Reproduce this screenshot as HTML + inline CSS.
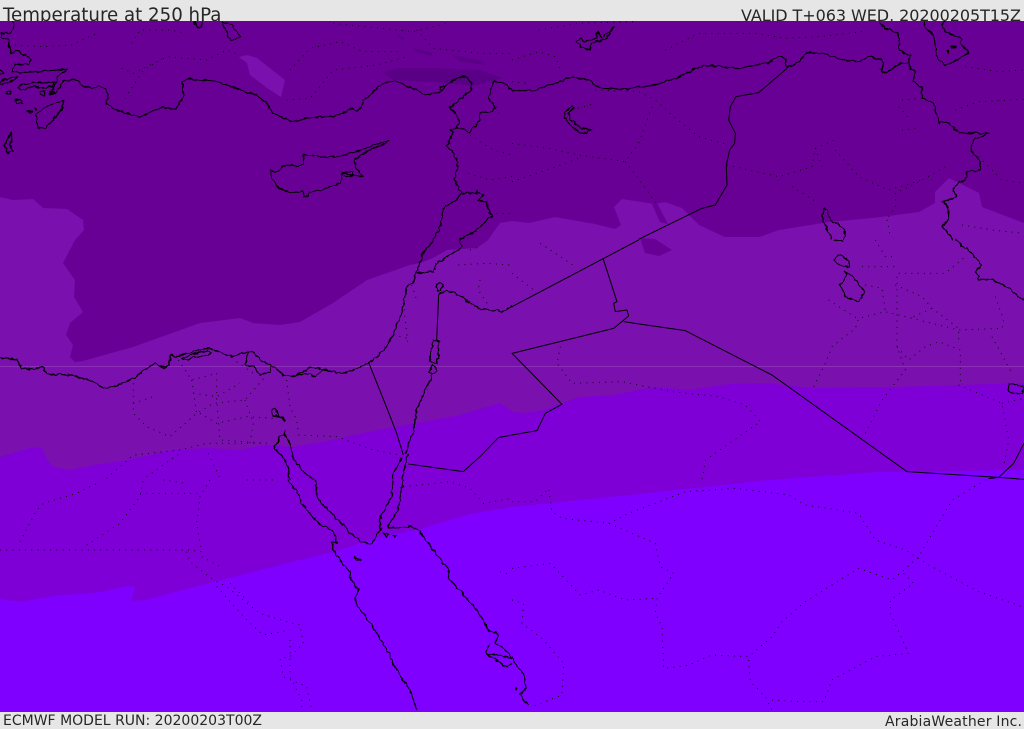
<!DOCTYPE html>
<html><head><meta charset="utf-8"><title>Temperature at 250 hPa</title>
<style>
html,body{margin:0;padding:0;background:#e6e6e6;overflow:hidden}
svg{display:block}
text{font-family:"DejaVu Sans","Liberation Sans",sans-serif;fill:#262626}
.c path{fill:none;stroke:#000;stroke-width:3.6;stroke-linejoin:round}
.b path{fill:none;stroke:#000;stroke-width:3;stroke-linejoin:round}
.d path{fill:none;stroke:#000;stroke-width:2.8;stroke-dasharray:2.8 16}
</style></head><body>
<svg width="1024" height="729" viewBox="0 0 1024 729" xmlns="http://www.w3.org/2000/svg">
<defs><clipPath id="m"><rect x="0" y="21" width="1024" height="691"/></clipPath>
<filter id="w" x="-5%" y="-5%" width="110%" height="110%" color-interpolation-filters="sRGB"><feTurbulence type="fractalNoise" baseFrequency=".07" numOctaves="2" seed="4"/><feDisplacementMap in="SourceGraphic" scale="12" xChannelSelector="R" yChannelSelector="G"/></filter></defs>
<rect width="1024" height="729" fill="#e6e6e6"/>
<text x="3" y="21" font-size="18.2">Temperature at 250 hPa</text>
<text x="1021" y="21" font-size="16" text-anchor="end" textLength="280">VALID T+063 WED, 20200205T15Z</text>
<text x="3" y="725" font-size="14" textLength="259">ECMWF MODEL RUN: 20200203T00Z</text>
<text x="885" y="726" font-size="14" textLength="137">ArabiaWeather Inc.</text>
<g clip-path="url(#m)">
<rect x="0" y="21" width="1024" height="691" fill="#7f00ff"/>
<path fill="#7e00d6" d="M0 21L0 599 12 601 25 601 60 595 82 594 100 592 128 586 135 587 133 595 132 601 145 600 213 582 300 560 333 552 380 537 417 530 470 514 512 507 640 494 769 480 879 472 1024 470 1024 21Z"/>
<path fill="#7a10ad" d="M0 21L0 457 33 447 42 448 47 460 53 467 70 470 93 465 127 460 173 450 207 448 240 450 263 445 293 447 333 440 367 432 417 423 460 415 500 403 512 412 525 413 545 410 579 397 612 395 655 387 689 390 729 384 765 383 812 388 895 387 1024 383 1024 21Z"/>
<rect x="0" y="366" width="1024" height="1" fill="#8c30b8"/>
<path fill="#690096" d="M0 21L0 197 13 200 33 199 43 208 67 209 83 220 84 230 75 240 63 263 75 280 74 297 83 312 70 323 66 335 73 345 70 357 75 362 83 361 133 347 200 323 240 318 253 323 280 325 300 322 333 303 367 280 410 265 420 263 433 258 447 250 477 248 488 240 500 223 512 221 529 223 555 217 595 224 615 229 621 225 614 207 622 199 655 204 665 202 682 208 699 225 725 237 759 237 779 230 829 222 872 218 919 212 935 203 935 192 949 178 979 193 982 207 1024 223 1024 21Z"/>
<path fill="#7a10ad" d="M239 57L247 55 257 58 285 80 281 97 267 88 250 75 247 63Z"/>
<path fill="#690096" d="M652 204L657 203 668 224 660 222Z M640 238L655 239 672 250 659 256 645 253Z"/>
<path fill="#5a0086" d="M383 73L397 68 433 68 480 70 503 78 473 86 433 82 393 80Z M397 34L405 38 403 40 397 37Z M413 48L433 53 431 56 414 51Z M452 55L483 61 485 65 460 61Z"/>
<g transform="scale(.33333)">
<g class="d">
<path d="M45 135L130 140 215 135 290 100M395 130L420 90 510 90 560 100M375 295L430 210 500 170 620 180 680 150 720 165M365 205L400 220 500 170M870 210L930 145 1020 125 1090 155 1200 155M860 300L930 295 1000 210 1130 195 1220 170M1000 70L1240 95 1340 70M1250 90L1300 145 1440 160 1536 160M1410 405L1480 450 1536 465M1405 520L1470 540 1536 530M1490 320L1500 350M1470 640L1536 640"/>
</g>
<g class="c" filter="url(#w)">
<path d="M40 63L42 83 28 101 5 98 2 113 25 121 32 158 58 153 70 168 75 163 95 178 85 191 45 193 35 215 60 218 205 208 172 228 172 245 155 272 148 280 165 280 190 243 225 238 250 258 280 265 295 258 320 268 325 290 320 312 345 328 395 345 420 350 490 322 525 330 535 320 550 285 548 245 565 235 580 240 640 242 680 255 720 270 770 285 800 310 820 340 870 362 895 363 915 355 1010 347 1060 325 1070 335 1085 320 1090 300 1150 250 1185 243 1230 262 1280 285 1305 278 1325 275 1335 255 1380 230 1395 228 1412 245 1415 270 1350 322 1380 365 1370 385 1350 390 1360 395 1345 430 1340 438 1355 450 1375 490 1363 535 1383 580 1370 600 1330 625 1320 680 1300 720"/>
<path d="M1536 272L1510 250 1482 242 1470 280 1465 295 1485 320 1480 335 1440 338 1438 365 1408 395 1380 385 1370 380"/>
<path d="M1383 580L1430 580 1430 572 1450 585 1435 600 1460 605 1470 640 1475 648 1425 695 1380 718"/>
<path d="M190 301L160 311 130 325 108 343 110 363 115 385 135 383 160 358 185 328ZM33 398L20 428 12 433 22 458 38 453 30 433 35 398ZM0 248L30 231 55 233 25 248 0 253M55 263L65 253 100 248 165 246 160 258 130 263 100 258 80 268 60 268ZM20 275L30 273 33 282 18 282ZM118 278L133 271 135 288 120 285ZM148 277L162 275 160 283 148 283ZM45 301L60 298 68 311 50 308ZM80 333L95 331 95 336 80 336ZM105 326L110 328 106 331ZM580 65L597 85 607 65M665 68L690 72 722 110 690 122 680 95ZM0 210L12 218 5 222 0 220M1320 262L1335 258 1325 272 1318 268Z"/>
<path d="M810 510L825 518 850 497 895 498 910 490 912 463 980 472 1020 468 1070 455 1165 420 1160 428 1090 460 1063 480 1065 500 1090 530 1060 525 1025 520 1020 550 960 572 925 575 925 590 912 590 908 575 870 578 835 565 815 530Z"/>
<path d="M1025 518L1060 515 1060 528 1030 530"/>
</g>
</g>
<g transform="translate(512 0) scale(.33333)">
<g class="d">
<path d="M80 90L200 70 370 65M0 180L80 155 130 170 145 210M460 150L560 100 730 100 820 115 920 110 1050 95M0 245L50 250M250 270L380 275 430 300 480 345 560 410 650 435M180 330L250 310M0 430L110 445 200 465 340 485 380 430 420 320M0 545L120 505 200 475M340 485L375 530 440 620M645 495L800 530 900 500 910 445 980 415M910 445L930 500M970 450L1040 530 1130 570 1230 540M840 560L920 610M1150 620L1150 580 1230 540 1300 500M1170 300L1230 295M1170 390L1220 385M1160 320L1195 360M1330 330L1400 305 1536 298M1400 470L1470 540 1536 550M1360 200L1460 215 1536 210M1130 650L1150 620M1350 675L1440 690 1536 700M1125 660L1135 710"/>
</g>
<g class="b">
<path d="M825 205L740 278 672 290 655 320 650 360 670 400 668 430 653 450 643 495 645 555 610 615 570 625 380 718"/>
</g>
<g class="c" filter="url(#w)">
<path d="M0 272L70 272 110 255 185 230 230 240 265 265 340 268 430 255 490 235 565 200 600 197 680 205 770 188 800 168 820 175 825 200 850 195 885 158 930 160 1000 180 1045 185 1070 168 1110 180 1115 195 1105 210 1120 220 1165 190 1190 190 1195 205 1210 215 1205 245 1230 262 1230 295 1265 308 1280 370 1305 365 1340 398 1430 400 1385 420 1378 450 1405 485 1405 510 1365 515 1360 540 1340 545 1325 570 1335 590 1295 605 1310 625 1310 660 1290 680 1325 718"/>
<path d="M1105 65L1110 80 1160 100 1163 150 1195 170 1190 190"/>
<path d="M1235 65L1240 85 1265 105 1275 170 1300 197 1335 180 1370 158 1345 130 1350 115 1300 95 1290 75 1300 65"/>
<path d="M1305 150L1312 152 1308 160ZM1318 138L1330 142 1322 146Z"/>
<path d="M192 125L205 115 220 125 255 115 255 95 270 115 300 85 305 80 285 115 240 130 235 150 205 140Z"/>
<path d="M182 318L185 325 170 340 175 360 210 385 240 390 215 400 205 400 175 375 158 355 160 335Z"/>
<path d="M935 625L945 630 955 660 990 680 1000 695 995 720M935 625L930 650 940 680 960 718"/>
</g>
</g>
<g transform="translate(0 240) scale(.33333)">
<g class="d">
<path d="M400 430L400 520 440 560 510 590 590 520 640 490 735 480 800 405M400 490L460 470M535 360L575 420 650 400M575 420L590 520M580 460L650 470 720 430M650 400L650 480 660 600 800 610M735 480L760 550 750 610M600 520L650 550 740 530 820 535M860 420L870 500 890 540 895 580M710 365L760 400 800 400M895 585L1010 590 1120 630 1200 645M320 715L400 645 540 630 620 610 800 610M440 710L540 640M625 640L660 715M1235 135L1250 180M1210 190L1225 320M1180 285L1225 295M1375 75L1460 70 1530 75M1440 120L1435 150 1465 195M1410 30L1440 20"/>
</g>
<g class="b">
<path d="M1107 370L1155 490 1165 515 1190 580 1210 645"/>
<path d="M1225 672L1390 695 1440 650 1495 593 1536 585"/>
<path d="M1316 165L1310 300"/>
</g>
<g class="c" filter="url(#w)">
<path d="M1300 0L1270 40 1250 95 1240 130 1220 140 1205 220 1180 280 1160 320 1130 350 1105 370 1060 390 1050 395 1025 400 995 395 960 385 930 382 880 410 850 405 830 385 810 375 785 365 760 335 745 335 695 350 660 337 625 325 560 340 525 350 515 342 508 377 485 380 465 370 450 380 400 415 340 440 310 445 280 425 215 405 140 402 130 380 100 388 65 385 50 360 0 352"/>
<path d="M1380 0L1385 20 1375 30 1310 70 1300 95 1250 100"/>
<path d="M545 355L570 345 625 332 635 340 610 350 580 350 565 360 545 357ZM745 335L735 373 765 382 780 407 810 395 812 375M875 410L920 400 945 410 970 390 995 395M480 377L505 377 490 385Z"/>
<path d="M1300 300L1318 302 1312 370 1290 365 1292 335ZM1318 127L1328 135 1325 150 1316 155 1309 140ZM1298 375L1310 390 1300 403 1285 395Z"/>
<path d="M1298 403L1250 510 1240 575 1215 640"/>
<path d="M1316 165L1340 150 1380 165 1400 185 1440 205 1505 215 1536 200"/>
<path d="M1225 640L1215 680 1205 720M1205 650L1180 700 1178 720"/>
<path d="M815 510L825 505 838 530 850 535 855 543 835 530 820 525Z"/>
<path d="M855 570L855 585 840 590 822 625 850 650 868 690 868 720M855 585L870 610 880 655 910 695 940 720"/>
</g>
</g>
<g transform="translate(512 240) scale(.33333)">
<g class="d">
<path d="M85 10L190 80M0 100L65 150M145 320L135 370 180 430 330 425 480 455 620 470 700 495 745 545 580 660 570 720M905 440L940 370 960 320 1030 265 1040 235 1120 215 1200 235 1340 270 1470 265M950 180L1035 235M1060 580L1110 480 1180 390 1155 320 1190 360 1240 320 1280 305 1345 330 1345 430M1155 320L1155 100 1300 100 1360 50M1050 80L1150 80M1060 135L1110 145 1120 215M1150 135L1230 170 1260 205 1340 265 1340 310M1205 230L1260 205M1440 290L1500 400M1450 170L1475 240 1470 265M1340 435L1470 490 1490 600 1475 680M1470 490L1536 475M1090 0L1120 50 1155 50"/>
</g>
<g class="b">
<path d="M0 200L380 0"/>
<path d="M0 585L75 572 100 520 150 493 0 340 305 265 350 228 345 210 310 215 305 190 315 185 273 55"/>
<path d="M335 245L520 272 780 405 1185 695 1460 712 1536 718"/>
<path d="M1430 716L1460 712 1505 670 1536 610"/>
</g>
<g class="c" filter="url(#w)">
<path d="M1330 0L1375 35 1408 75 1390 95 1400 118 1440 118 1490 145 1536 182"/>
<path d="M1000 95L1003 105 985 135 1000 170 1040 185 1060 155 1020 110ZM965 60L985 45 1012 65 1010 80 990 80ZM962 0L995 3M1490 432L1536 440 1530 462 1490 458Z"/>
</g>
</g>
<g transform="translate(0 480) scale(.33333)">
<g class="d">
<path d="M0 210L570 210 605 215 590 130 600 50 630 0M60 185L110 90 130 70 230 40 300 5M260 195L360 130 420 50 430 0M420 40L600 40M490 0L560 10M560 215L570 245 640 300 680 320 780 400 860 425 900 435 910 490 870 530 840 535 850 590 920 620 935 690M605 230L670 265M650 320L740 420 790 465 870 450M690 310L750 370M870 480L870 590 905 660 905 695M740 0L830 0M1210 20L1350 5 1410 25 1450 70 1536 55M1500 275L1536 285"/>
</g>
<g class="c" filter="url(#w)">
<path d="M865 0L895 40 905 70 950 125 1000 155 1012 190 995 185 1000 210 1030 255 1050 275 1048 290 1075 330 1065 365 1125 450 1160 510 1190 570 1230 630 1250 690"/>
<path d="M945 0L955 60 1015 120 1050 160 1085 187 1115 190 1140 150 1142 110 1175 50 1180 0"/>
<path d="M1208 0L1195 90 1165 135 1170 145 1235 140 1260 155 1310 225 1350 275 1345 295 1400 355 1430 390 1450 420 1465 452 1488 458 1492 475 1485 490 1498 495 1525 520 1536 535"/>
<path d="M1470 487L1458 515 1470 530 1510 555 1520 562 1536 548M1458 520L1500 525 1530 535 1536 530M1150 160L1168 165 1160 172ZM1178 165L1188 168 1182 172ZM1065 230L1083 240 1070 240Z"/>
</g>
</g>
<g transform="translate(512 480) scale(.33333)">
<g class="d">
<path d="M0 65L70 65 110 25 120 95 150 115 290 130 430 190 445 260 485 280 435 355 430 400 450 440 455 565 530 555 600 525 710 530 780 470 810 425 880 365 1040 265 1140 300 1170 275 1220 230 1320 60 1420 0M290 130L350 100 520 35 670 25 830 45 880 75 1040 100 1090 180 1180 210 1250 255 1400 335 1530 380M0 265L115 250 205 345 260 330 340 360 435 355M0 360L35 370 30 430 90 475 155 550 150 645 60 680M710 540L715 605 760 650 780 690M780 660L860 665 935 665 960 600 1090 530 1190 520 1135 400 1135 360 1205 310 1170 275"/>
</g>
<g class="c" filter="url(#w)">
<path d="M0 530L9 550 34 580 42 625 24 645 34 655 49 675"/>
<path d="M10 623L16 625 12 628Z"/>
</g>
</g>
</g>
</svg>
</body></html>
